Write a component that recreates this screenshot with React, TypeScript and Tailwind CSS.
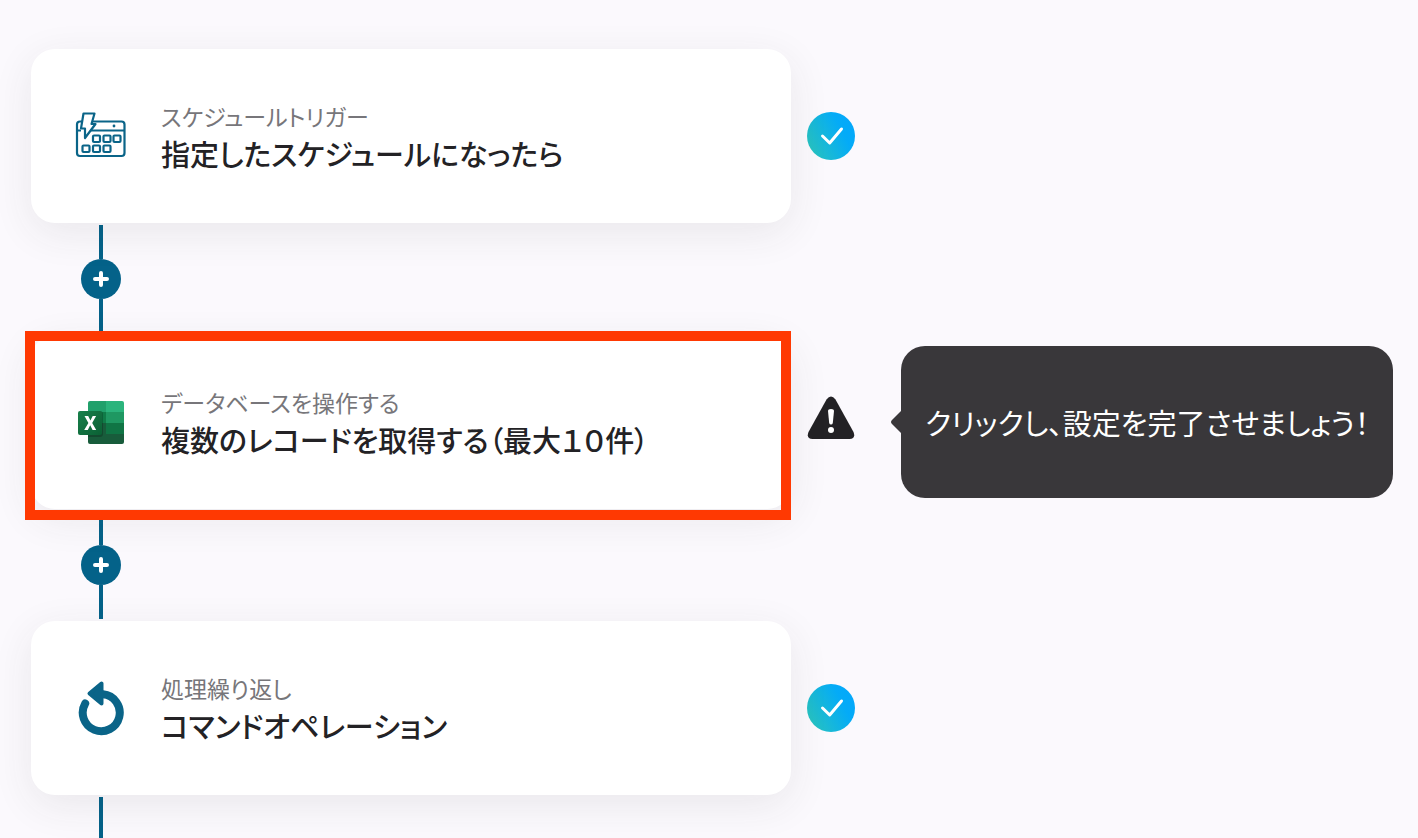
import type { ReactNode } from "react";

type Status = "done" | "warning";

type Step = {
  id: string;
  category: string;
  title: string;
  icon: ReactNode;
  status: Status;
  hint?: string;
}

function ScheduleIcon() {
  return (
    <svg viewBox="0 0 52 48" className="h-12 w-[52px]" fill="none" stroke="#0a6488" strokeWidth="2.200" strokeLinejoin="round">
      <path d="M17 9.500H46.500a3 3 0 0 1 3 3V41a3 3 0 0 1-3 3H5a3 3 0 0 1-3-3V12.500a3 3 0 0 1 3-3h2"/>
      <path d="M16 18.500H49.500M2 18.500h4"/>
      <path d="M8.500 1.500h11l-3 10.500h4L10 26v-9.500H6z" fill="#fff"/>
      <circle cx="39" cy="14" r="1.400" fill="#0a6488" stroke="none"/>
      <rect x="18" y="23.500" width="7" height="6.500" rx="1"/>
      <rect x="28.500" y="23.500" width="7" height="6.500" rx="1"/>
      <rect x="38.500" y="23.500" width="7" height="6.500" rx="1"/>
      <rect x="7.500" y="33.500" width="7" height="6.500" rx="1"/>
      <rect x="18" y="33.500" width="7" height="6.500" rx="1"/>
      <rect x="28.500" y="33.500" width="7" height="6.500" rx="1"/>
    </svg>
  )
}

function ExcelIcon() {
  return (
    <svg viewBox="0 0 52 48" className="h-12 w-[52px]">
      <defs>
        <linearGradient id="excelTile" x1="0" y1="0" x2="1" y2="1">
          <stop offset="0" stopColor="#18804b"/>
          <stop offset="1" stopColor="#0b6034"/>
        </linearGradient>
        <clipPath id="excelSheet">
          <rect x="13" y="3" width="36" height="43" rx="2"/>
        </clipPath>
      </defs>
      <g clipPath="url(#excelSheet)">
        <rect x="13" y="3" width="18" height="11" fill="#21a06b"/>
        <rect x="31" y="3" width="18" height="11" fill="#2bb47c"/>
        <rect x="13" y="14" width="18" height="11" fill="#107c48"/>
        <rect x="31" y="14" width="18" height="11" fill="#1f9862"/>
        <rect x="13" y="25" width="18" height="21" fill="#185c3b"/>
        <rect x="31" y="25" width="18" height="11" fill="#107545"/>
        <rect x="31" y="36" width="18" height="10" fill="#185c3b"/>
        <path d="M13 13h12a3 3 0 0 1 3 3v20a3 3 0 0 1-3 3H13z" fill="#000" opacity=".2"/>
      </g>
      <rect x="3" y="13" width="24" height="24" rx="2" fill="url(#excelTile)"/>
      <path d="M9.500 18h3.700l2.200 4.500 2.300-4.500h3.400l-3.900 7 4 7h-3.600l-2.400-4.700-2.400 4.700H9.200l4.200-7z" fill="#fff"/>
    </svg>
  )
}

function RepeatIcon() {
  return (
    <svg viewBox="0 0 52 56" className="h-14 w-[52px]" fill="none">
      <path d="M10.200 23.500A18.500 18.500 0 1 0 28 14.300" stroke="#0a6488" strokeWidth="8" strokeLinecap="round"/>
      <path d="M14.500 13.500 26.500 3.500v20z" fill="#0a6488" stroke="#0a6488" strokeWidth="4" strokeLinejoin="round"/>
    </svg>
  )
}

function DoneIcon() {
  return (
    <svg viewBox="0 0 48 48" className="size-12" role="img" aria-label="完了">
      <defs>
        <linearGradient id="done" x1="0" y1=".8" x2="1" y2=".3">
          <stop offset="0" stopColor="#2ac4bd"/>
          <stop offset=".75" stopColor="#04abf7"/>
          <stop offset="1" stopColor="#04a8fb"/>
        </linearGradient>
      </defs>
      <circle cx="24" cy="24" r="24" fill="url(#done)"/>
      <path d="M15.500 24l7.200 7L34.500 17" fill="none" stroke="#fff" strokeWidth="3" strokeLinecap="round" strokeLinejoin="round"/>
    </svg>
  )
}

function WarningIcon() {
  return (
    <svg viewBox="0 0 48 56" className="h-14 w-12" role="img" aria-label="未設定">
      <path d="M19.500 5.500q4.500-6 9 0L46.500 38q2.500 7-4 7h-37q-6.500 0-4-7z" fill="#232225"/>
      <path d="M21 17q0-2 3-2t3 2l-1.200 12q-.3 1.500-1.800 1.500t-1.800-1.500z" fill="#fff"/>
      <circle cx="24" cy="36" r="3" fill="#fff"/>
    </svg>
  )
}

const steps: Step[] = [
  {
    id: "schedule",
    category: "スケジュールトリガー",
    title: "指定したスケジュールになったら",
    icon: <ScheduleIcon/>,
    status: "done",
  },
  {
    id: "records",
    category: "データベースを操作する",
    title: "複数のレコードを取得する（最大１０件）",
    icon: <ExcelIcon/>,
    status: "warning",
    hint: "クリックし、設定を完了させましょう！",
  },
  {
    id: "loop",
    category: "処理繰り返し",
    title: "コマンドオペレーション",
    icon: <RepeatIcon/>,
    status: "done",
  },
]

function Connector({last}: { last?: boolean }) {
  if (last) {
    return (
      <div className="ml-11 flex min-h-10 w-[52px] flex-1 justify-center pt-0.5">
        <div className="w-1 bg-[#046289]"/>
      </div>
    )
  }

  return (
    <div className="ml-11 flex h-28 w-[52px] flex-col items-center py-0.5">
      <div className="w-1 flex-1 bg-[#046289]"/>
      <button type="button" aria-label="追加" className="flex size-10 items-center justify-center rounded-full bg-[#046289]">
        <svg viewBox="0 0 16 16" className="size-4" stroke="#fff" strokeWidth="4" strokeLinecap="round">
          <path d="M8 2v12M2 8h12"/>
        </svg>
      </button>
      <div className="w-1 flex-1 bg-[#046289]"/>
    </div>
  )
}

function StepRow({step}: { step: Step }) {
  return (
    <div className="grid grid-cols-[minmax(0,760px)_48px_auto] items-center justify-start gap-x-4">
      <div className="relative">
        <button
          type="button"
          className="flex w-full items-center gap-[34px] rounded-3xl bg-white py-12 pl-11 pr-6 text-left shadow-[0_10px_40px_rgba(60,50,60,0.09)]"
        >
          <span className="flex w-[52px] shrink-0 justify-center">{step.icon}</span>
          <span className="flex flex-col pt-1">
            <span className="text-[23px] leading-[30px] text-[#77767a]">{step.category}</span>
            <span className="text-[29px] font-medium leading-[44px] text-[#232225]">{step.title}</span>
          </span>
        </button>
        {step.hint && (
          <div className="pointer-events-none absolute -bottom-[11px] -left-1.5 -top-1 right-0 border-10 border-[#ff3902]"/>
        )}
      </div>
      {step.status === "done" ? <DoneIcon/> : <WarningIcon/>}
      {step.hint && (
        <div role="tooltip" className="-my-2 flex items-center pl-5">
          <svg viewBox="0 0 10 24" className="h-6 w-2.5" fill="#39373a">
            <path d="M10 1v22L1 14q-2-2 0-4z"/>
          </svg>
          <p className="rounded-3xl bg-[#39373a] px-6 py-[54px] text-[29px] leading-[44px] text-white">{step.hint}</p>
        </div>
      )}
    </div>
  )
}

function App() {
  return (
    <main
      lang="ja"
      className="flex min-h-screen flex-col overflow-hidden bg-[#fbf9fd] pl-[31px] pt-[49px] font-['Noto_Sans_CJK_JP',sans-serif] [font-feature-settings:'palt']"
    >
      {steps.map((step, i) => (
        <div key={step.id} className={i === steps.length - 1 ? "flex flex-1 flex-col" : "flex flex-col"}>
          <StepRow step={step}/>
          <Connector last={i === steps.length - 1}/>
        </div>
      ))}
    </main>
  )
}

export default App
